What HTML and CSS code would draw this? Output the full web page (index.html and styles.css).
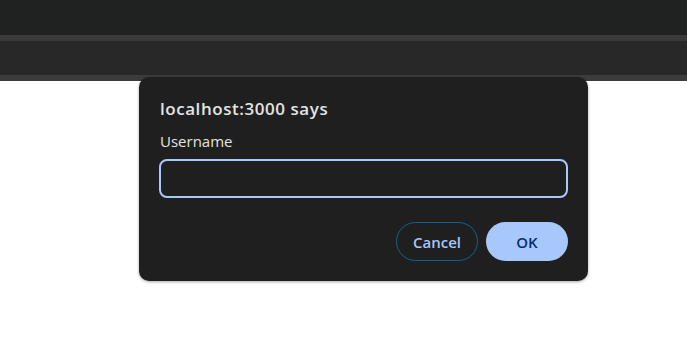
FILE: index.html
```html
<!DOCTYPE html>
<html>
<head>
<meta charset="utf-8">
<link rel="stylesheet" href="styles.css">
</head>
<body>
<header class="chrome">
  <div class="tabbar"></div>
  <div class="divider"></div>
  <div class="toolbar"></div>
  <div class="divider bottom"></div>
</header>
<main class="page"></main>
<div class="dialog" role="dialog">
  <div class="title">localhost:3000 says</div>
  <label class="label" for="u">Username</label>
  <input class="field" id="u" type="text">
  <div class="actions">
    <button class="btn cancel">Cancel</button>
    <button class="btn ok">OK</button>
  </div>
</div>
</body>
</html>
```
FILE: styles.css
```css
html, body {
  margin: 0;
  padding: 0;
  background: #ffffff;
  font-family: "Open Sans", "Noto Sans", sans-serif;
}
.chrome {
  display: flex;
  flex-direction: column;
}
.tabbar {
  height: 35px;
  background: #202221;
}
.divider {
  height: 6px;
  background: #3a3a3a;
}
.divider.bottom {
  background: #3c3c3c;
}
.toolbar {
  height: 34px;
  background: #282828;
}
.dialog {
  position: absolute;
  top: 77px;
  left: 139px;
  width: 449px;
  box-sizing: border-box;
  padding: 20px 20px 20px;
  background: #1f1f1f;
  border-radius: 10px;
  box-shadow: 0 1px 3px rgba(0,0,0,0.35);
  display: flex;
  flex-direction: column;
}
.title {
  color: #e3e3e3;
  font-size: 17px;
  font-weight: 600;
  line-height: 24px;
  letter-spacing: 0.55px;
  padding-left: 1px;
}
.label {
  color: #e3e3e3;
  font-size: 15px;
  line-height: 20px;
  margin-top: 10px;
  padding-left: 1px;
}
.field {
  margin-top: 8px;
  height: 39px;
  box-sizing: border-box;
  border: 2px solid #a8c7fa;
  border-radius: 8px;
  background: #1f1f1f;
  outline: none;
  color: #e3e3e3;
  padding: 0 10px;
}
.actions {
  display: flex;
  justify-content: flex-end;
  gap: 8px;
  margin-top: 24px;
}
.btn {
  width: 82px;
  height: 39px;
  border-radius: 20px;
  font-family: inherit;
  font-size: 15px;
  font-weight: 600;
  padding: 0;
  cursor: pointer;
}
.cancel {
  background: transparent;
  border: 1px solid #0b6590;
  color: #a8c7fa;
}
.ok {
  background: #a8c7fa;
  border: none;
  color: #062e6f;
}
```
